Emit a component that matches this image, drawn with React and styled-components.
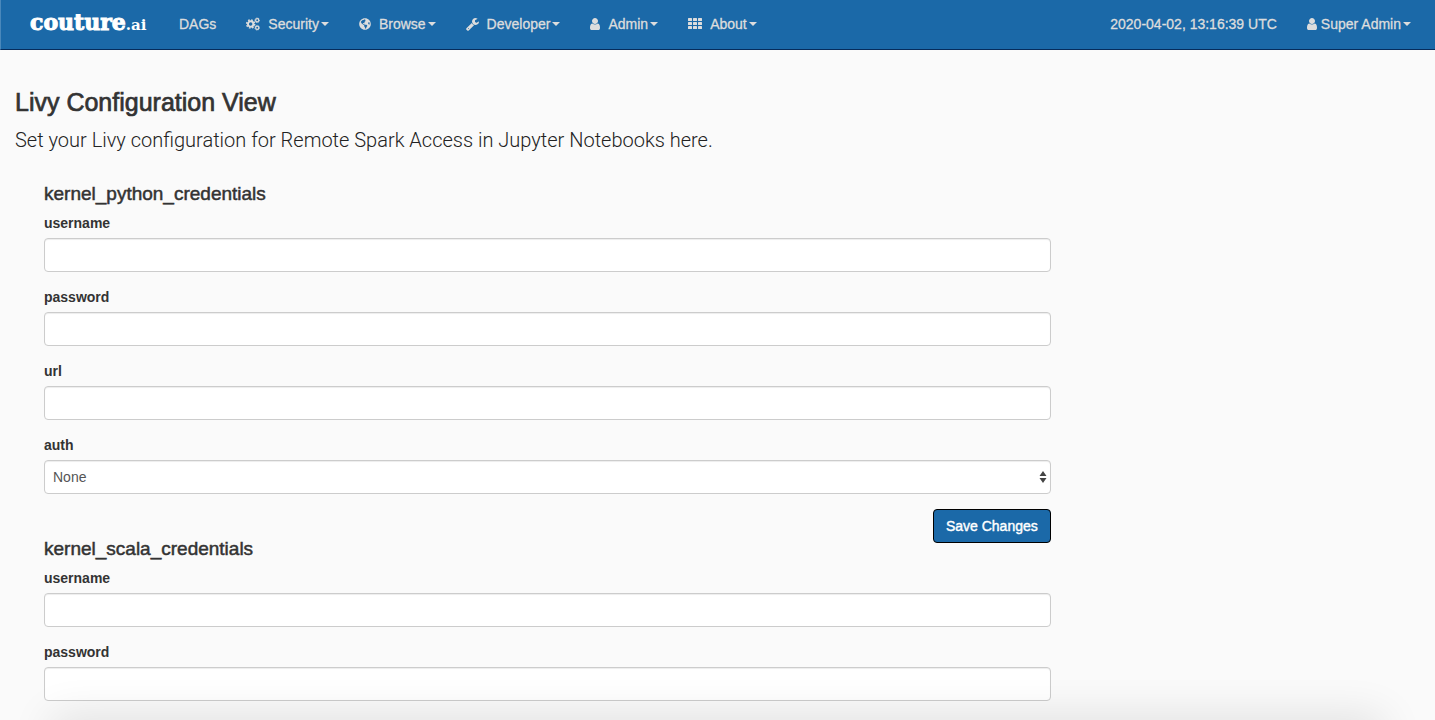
import React, { useId } from "react";
import styled, { createGlobalStyle } from "styled-components";
import { FaGlobeAmericas } from "react-icons/fa";

const GlobalStyle = createGlobalStyle`
  *, *::before, *::after { box-sizing: border-box; }
  body {
    margin: 0;
    background: #fafafa;
    color: #333;
    font-family: "Helvetica Neue", "Liberation Sans", Arial, sans-serif;
    font-size: 14px;
    line-height: 20px;
  }
`;

const Navbar = styled.nav`
  display: flex;
  align-items: center;
  height: 50px;
  padding: 0 9px 2px 14px;
  background: #1b69a8;
  border-bottom: 1px solid #062c5c;
  border-left: 1px solid #4a88bb;
`;

const Brand = styled.a`
  width: 149px;
  padding: 0 15px;
  color: #fff;
  font-family: "DejaVu Serif", serif;
  font-size: 22px;
  font-weight: 700;
  line-height: 24px;
  text-decoration: none;
  white-space: nowrap;
  -webkit-text-stroke: 1px #fff;
`;

const BrandSuffix = styled.span`
  font-size: 15px;
  -webkit-text-stroke: 0;
`;

const NavList = styled.ul`
  display: flex;
  margin: 0;
  padding: 0;
  list-style: none;
  ${(p) => p.$end && "margin-left: auto;"}
`;

const NavLink = styled.a`
  display: flex;
  align-items: center;
  padding: 0 15px;
  color: #ddd;
  text-decoration: none;
  white-space: nowrap;
  -webkit-text-stroke: 0.3px currentColor;
  svg {
    flex: none;
    margin-right: ${(p) => (p.$tight ? 4 : 8)}px;
    fill: currentColor;
  }
`;

const Caret = styled.span`
  margin-left: 2px;
  border-top: 4px solid currentColor;
  border-left: 4px solid transparent;
  border-right: 4px solid transparent;
`;

const Main = styled.main`
  padding: 40px 15px 0;
`;

const Title = styled.h1`
  margin: 0;
  font-size: 25px;
  font-weight: 400;
  line-height: 24px;
  padding-bottom: 2px;
  -webkit-text-stroke: 0.7px currentColor;
`;

const Lead = styled.p`
  margin: 9px 0 29px;
  color: #222;
  font-family: Roboto, sans-serif;
  font-size: 20px;
  font-weight: 300;
  line-height: 30px;
`;

const Form = styled.form`
  width: 75%;
  padding: 0 18px 0 29px;
`;

const SectionTitle = styled.h2`
  margin: 0 0 9px;
  font-size: 19px;
  font-weight: 400;
  line-height: 20px;
  -webkit-text-stroke: 0.5px currentColor;
`;

const Field = styled.div`
  margin-bottom: 15px;
`;

const Label = styled.label`
  display: block;
  margin-bottom: 5px;
  font-weight: 700;
`;

const Control = styled.input`
  display: block;
  width: 100%;
  height: 34px;
  padding: 6px 12px;
  border: 1px solid #ccc;
  border-radius: 4px;
  background: #fff;
  box-shadow: inset 0 1px 1px rgba(0, 0, 0, 0.075);
  color: #555;
  font: inherit;
`;

const SelectBox = styled.div`
  position: relative;
  svg {
    position: absolute;
    top: 11px;
    right: 4px;
    pointer-events: none;
  }
`;

const Select = styled(Control)`
  padding: 0 8px;
  appearance: none;
`;

const Actions = styled.div`
  display: flex;
  justify-content: flex-end;
  margin-bottom: -4px;
`;

const SaveButton = styled.button`
  height: 34px;
  padding: 0 12px;
  border: 1px solid #000;
  border-radius: 4px;
  background: #1b69a8;
  color: #fff;
  font: inherit;
  -webkit-text-stroke: 0.4px currentColor;
`;

const BottomShade = styled.div`
  position: fixed;
  right: 60px;
  bottom: -20px;
  left: 60px;
  height: 20px;
  box-shadow: 0 6px 44px 8px rgba(0, 0, 0, 0.12);
  pointer-events: none;
`;

const CogsIcon = () => (
  <svg width="14" height="14" viewBox="0 0 15 14" aria-hidden="true">
    <g style={{ fill: "none" }} stroke="currentColor">
      <circle cx="5" cy="7" r="2.9" strokeWidth="2.1" />
      <circle cx="5" cy="7" r="4.3" strokeWidth="1.6" strokeDasharray="1.8 1.58" />
      <circle cx="12" cy="3" r="1.7" strokeWidth="1.3" />
      <circle cx="12" cy="3" r="2.5" strokeWidth="0.9" strokeDasharray="1.1 0.86" />
      <circle cx="12" cy="11" r="1.7" strokeWidth="1.3" />
      <circle cx="12" cy="11" r="2.5" strokeWidth="0.9" strokeDasharray="1.1 0.86" />
    </g>
  </svg>
);

const UserIcon = () => (
  <svg width="10" height="12" viewBox="256 128 1280 1536" aria-hidden="true">
    <path d="M1536 1399q0 109-62.5 187t-150.5 78h-854q-88 0-150.5-78t-62.5-187q0-85 8.5-160.5t31.5-152 58.5-131 94-89 134.5-34.5q131 128 313 128t313-128q76 0 134.5 34.5t94 89 58.5 131 31.5 152 8.5 160.5zm-256-887q0 159-112.5 271.5t-271.5 112.5-271.5-112.5-112.5-271.5 112.5-271.5 271.5-112.5 271.5 112.5 112.5 271.5z" />
  </svg>
);

const WrenchIcon = () => (
  <svg width="13" height="14" viewBox="64 0 1664 1792" aria-hidden="true">
    <path d="M448 1472q0-26-19-45t-45-19-45 19-19 45 19 45 45 19 45-19 19-45zm644-420l-682 682q-37 37-90 37-52 0-91-37l-106-108q-38-36-38-90 0-53 38-91l681-681q39 98 114.5 173.5t173.5 114.5zm634-435q0 39-23 106-47 134-164.5 217.5t-258.5 83.5q-185 0-316.5-131.5t-131.5-316.5 131.5-316.5 316.5-131.5q58 0 121.5 16.5t107.5 46.5q16 11 16 28t-16 28l-293 169v224l193 107q5-3 79-48.5t135.5-81 70.5-35.5q15 0 23.5 10t8.5 25z" />
  </svg>
);

const GridIcon = () => (
  <svg width="14" height="12" viewBox="0 0 14 12" aria-hidden="true">
    {[0, 4, 8].map((y) =>
      [0, 5, 10].map((x) => (
        <rect key={`${x}-${y}`} x={x} y={y} width="4" height="3" rx="0.5" />
      ))
    )}
  </svg>
);

const menus = [
  { text: "Security", icon: <CogsIcon /> },
  { text: "Browse", icon: <FaGlobeAmericas size={12} /> },
  { text: "Developer", icon: <WrenchIcon /> },
  { text: "Admin", icon: <UserIcon /> },
  { text: "About", icon: <GridIcon /> },
];

function TextField({ label, type = "text" }) {
  const id = useId();
  return (
    <Field>
      <Label htmlFor={id}>{label}</Label>
      <Control id={id} type={type} />
    </Field>
  );
}

function AuthField() {
  const id = useId();
  return (
    <Field>
      <Label htmlFor={id}>auth</Label>
      <SelectBox>
        <Select as="select" id={id} defaultValue="None">
          <option>None</option>
        </Select>
        <svg width="8" height="12" viewBox="0 0 8 12" fill="#444" aria-hidden="true">
          <path d="M4 0l3.5 5h-7zM4 12l3.5-5h-7z" />
        </svg>
      </SelectBox>
    </Field>
  );
}

export default function App() {
  return (
    <>
      <GlobalStyle />
      <Navbar>
        <Brand href="#">
          couture<BrandSuffix>.ai</BrandSuffix>
        </Brand>
        <NavList>
          <li>
            <NavLink href="#">DAGs</NavLink>
          </li>
          {menus.map((m) => (
            <li key={m.text}>
              <NavLink href="#">
                {m.icon}
                {m.text}
                <Caret />
              </NavLink>
            </li>
          ))}
        </NavList>
        <NavList $end>
          <li>
            <NavLink href="#">2020-04-02, 13:16:39 UTC</NavLink>
          </li>
          <li>
            <NavLink href="#" $tight>
              <UserIcon />
              Super Admin
              <Caret />
            </NavLink>
          </li>
        </NavList>
      </Navbar>
      <Main>
        <Title>Livy Configuration View</Title>
        <Lead>Set your Livy configuration for Remote Spark Access in Jupyter Notebooks here.</Lead>
        <Form onSubmit={(e) => e.preventDefault()}>
          <SectionTitle>kernel_python_credentials</SectionTitle>
          <TextField label="username" />
          <TextField label="password" type="password" />
          <TextField label="url" />
          <AuthField />
          <Actions>
            <SaveButton type="submit">Save Changes</SaveButton>
          </Actions>
          <SectionTitle>kernel_scala_credentials</SectionTitle>
          <TextField label="username" />
          <TextField label="password" type="password" />
        </Form>
      </Main>
      <BottomShade />
    </>
  );
}
